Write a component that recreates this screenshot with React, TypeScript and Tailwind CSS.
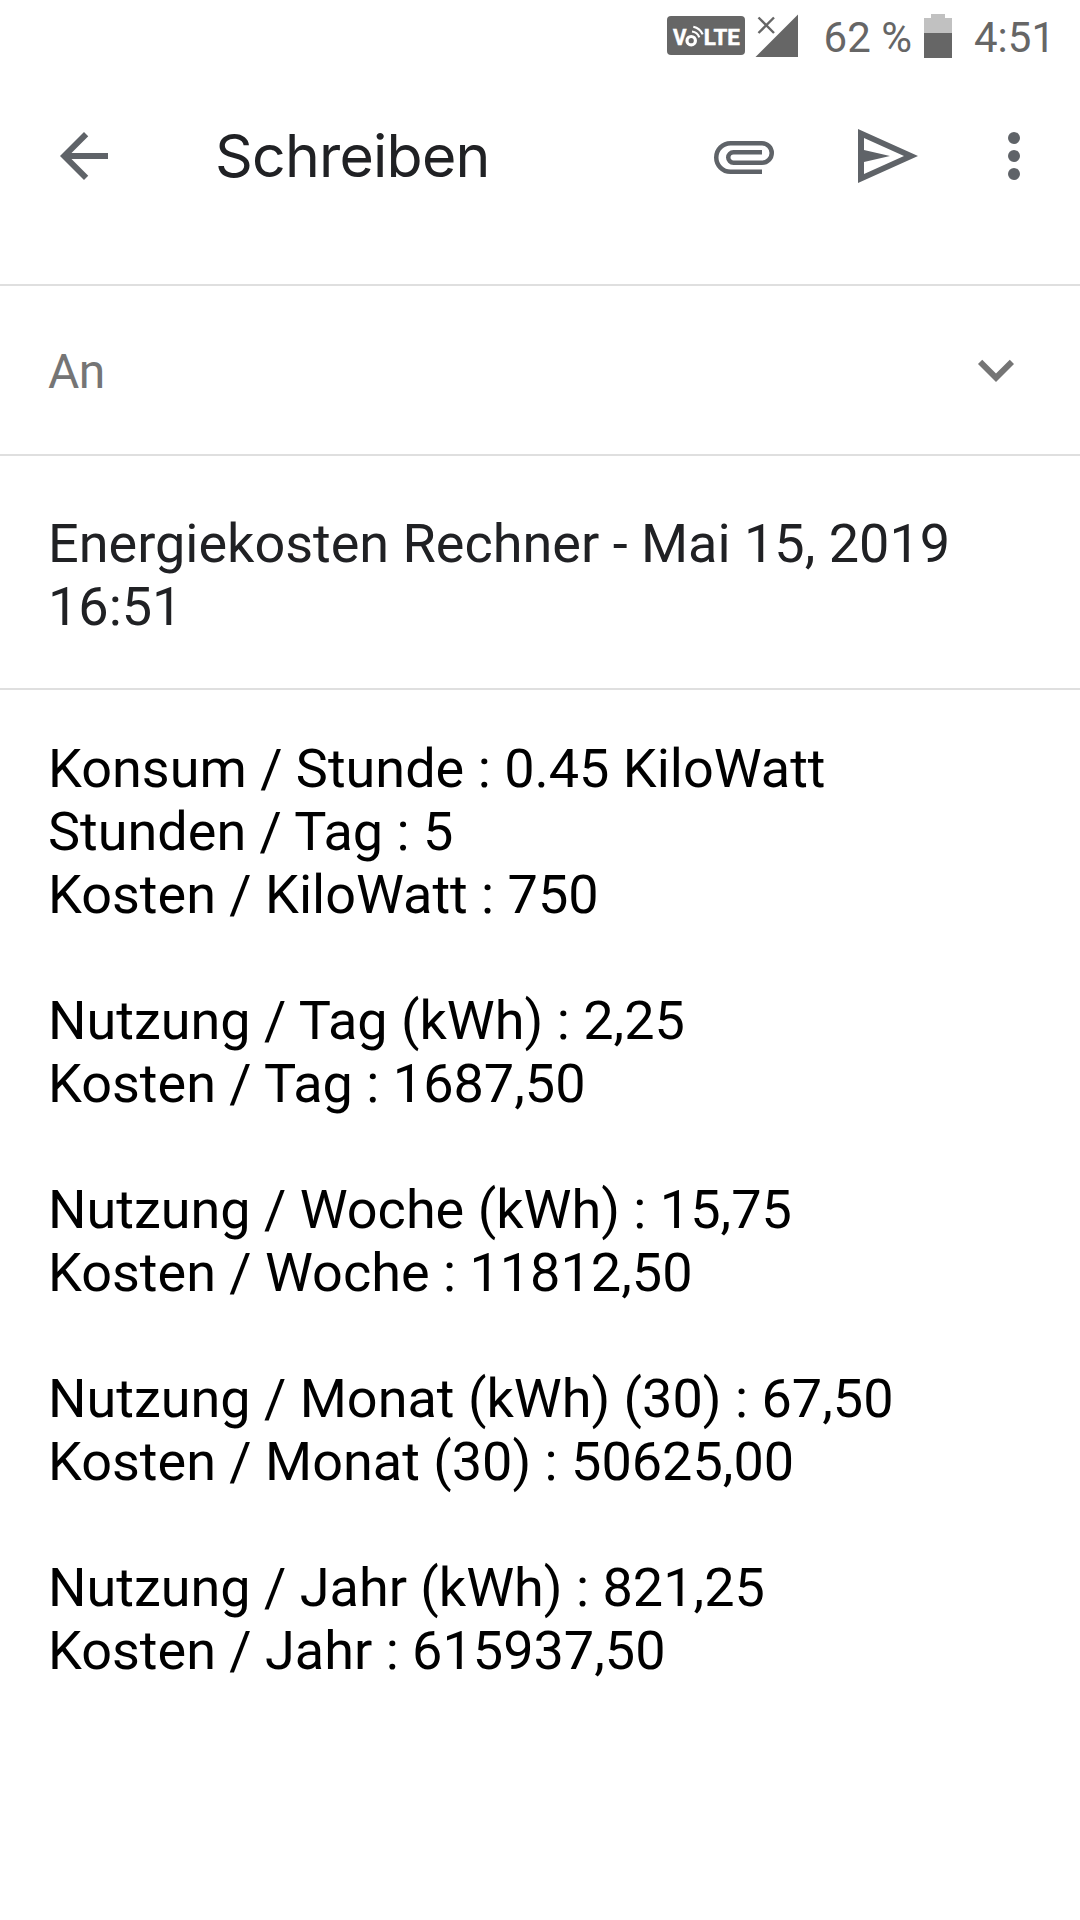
import React from 'react';

const groups = [
  ['Konsum / Stunde : 0.45 KiloWatt', 'Stunden / Tag : 5', 'Kosten / KiloWatt : 750'],
  ['Nutzung / Tag (kWh) : 2,25', 'Kosten / Tag : 1687,50'],
  ['Nutzung / Woche (kWh) : 15,75', 'Kosten / Woche : 11812,50'],
  ['Nutzung / Monat (kWh) (30) : 67,50', 'Kosten / Monat (30) : 50625,00'],
  ['Nutzung / Jahr (kWh) : 821,25', 'Kosten / Jahr : 615937,50'],
];

function VolteBadge() {
  return (
    <svg className="mb-px h-[39px] w-[78px] shrink-0" viewBox="0 0 78 39">
      <rect width="78" height="39" rx="4" fill="#666" />
      <g fill="#fff" stroke="#fff" strokeWidth="0.5" fontFamily="Roboto, sans-serif" fontWeight="700" fontSize="22.5">
        <text x="6" y="29" textLength="13.5" lengthAdjust="spacingAndGlyphs">V</text>
        <text x="36.8" y="29" textLength="36" lengthAdjust="spacingAndGlyphs">LTE</text>
      </g>
      <g fill="none" stroke="#fff">
        <circle cx="24.2" cy="24.7" r="4.2" strokeWidth="3.2" />
        <path d="M25 15.500a9 9 0 0 1 7.300 5.800" strokeWidth="2.2" />
        <path d="M26.300 10.800a13.500 13.500 0 0 1 9.400 7.600" strokeWidth="2.2" />
      </g>
    </svg>
  );
}

function NoSignal() {
  return (
    <svg className="ml-[10px] h-[44px] w-[43px] shrink-0" viewBox="0 0 43 44">
      <path d="M43 0.5V43H0.5z" fill="#666" />
      <path d="M3.500 3.500l15.500 15.500M19 3.500L3.500 19" stroke="#666" strokeWidth="2.400" />
    </svg>
  );
}

function Battery() {
  return (
    <div className="ml-[12px] flex h-[44px] w-[28px] shrink-0 flex-col items-center">
      <div className="h-[4px] w-[14px] bg-[#c1c1c1]" />
      <div className="h-[15px] w-full bg-[#c1c1c1]" />
      <div className="w-full grow bg-[#666]" />
    </div>
  );
}

export default function App() {
  return (
    <div className="h-[1920px] w-[1080px] overflow-hidden bg-white font-[Roboto,sans-serif]">
      <div className="flex h-[72px] items-center justify-end pr-[25px] text-[42px] leading-[50px] text-[#666]">
        <VolteBadge />
        <NoSignal />
        <span className="mt-[3px] ml-[26px]">62 %</span>
        <Battery />
        <span className="mt-[3px] ml-[22px]">4:51</span>
      </div>
      <header className="flex h-[212px] items-center pb-[44px] pl-[48px] text-[#5f6368]">
        <svg className="size-[72px]" viewBox="0 0 24 24" fill="currentColor">
          <path d="M20 11H7.830l5.590-5.590L12 4l-8 8 8 8 1.410-1.410L7.830 13H20z" />
        </svg>
        <h1 className="ml-[95px] grow font-[Inter] text-[59px] leading-[72px] tracking-[-0.8px] text-[#202124]">Schreiben</h1>
        <svg className="size-[72px]" viewBox="0 0 24 24" fill="none" stroke="currentColor" strokeWidth="1.5">
          <path d="M18 17.250H7.500a4.750 4.750 0 0 1 0-9.500H18a3.250 3.250 0 0 1 0 6.500H8.500a1.750 1.750 0 0 1 0-3.500H18" />
        </svg>
        <svg className="ml-[69px] size-[72px]" viewBox="0 0 72 72" fill="currentColor" fillRule="evenodd">
          <path d="M9 9l60 27L9 63zM15 18v12l26 6-26 6v12l40-18z" />
        </svg>
        <svg className="mr-[30px] ml-[57px] size-[72px]" viewBox="0 0 24 24" fill="currentColor">
          <circle cx="12" cy="6" r="2" />
          <circle cx="12" cy="12" r="2" />
          <circle cx="12" cy="18" r="2" />
        </svg>
      </header>
      <div className="flex h-[170px] items-center justify-between border-t-2 border-[#dfdfdf] pr-[48px] pl-[48px] text-[48px] text-[#757575]">
        <span className="mt-[3px] tracking-[-0.5px]">An</span>
        <svg className="size-[72px]" viewBox="0 0 24 24" fill="currentColor">
          <path d="M16.590 8.590L12 13.170 7.410 8.590 6 10l6 6 6-6z" />
        </svg>
      </div>
      <div className="h-[236px] border-y-2 border-[#dfdfdf] pt-[56px] pl-[48px] text-[54px] leading-[63px] text-[#202124]">
        <p>Energiekosten Rechner - Mai 15, 2019</p>
        <p>16:51</p>
      </div>
      <main className="flex flex-col gap-[63px] pt-[47px] pl-[48px] text-[54px] leading-[63px] text-black">
        {groups.map((g) => (
          <div key={g[0]}>{g.map((l) => <p key={l}>{l}</p>)}</div>
        ))}
      </main>
    </div>
  );
}
